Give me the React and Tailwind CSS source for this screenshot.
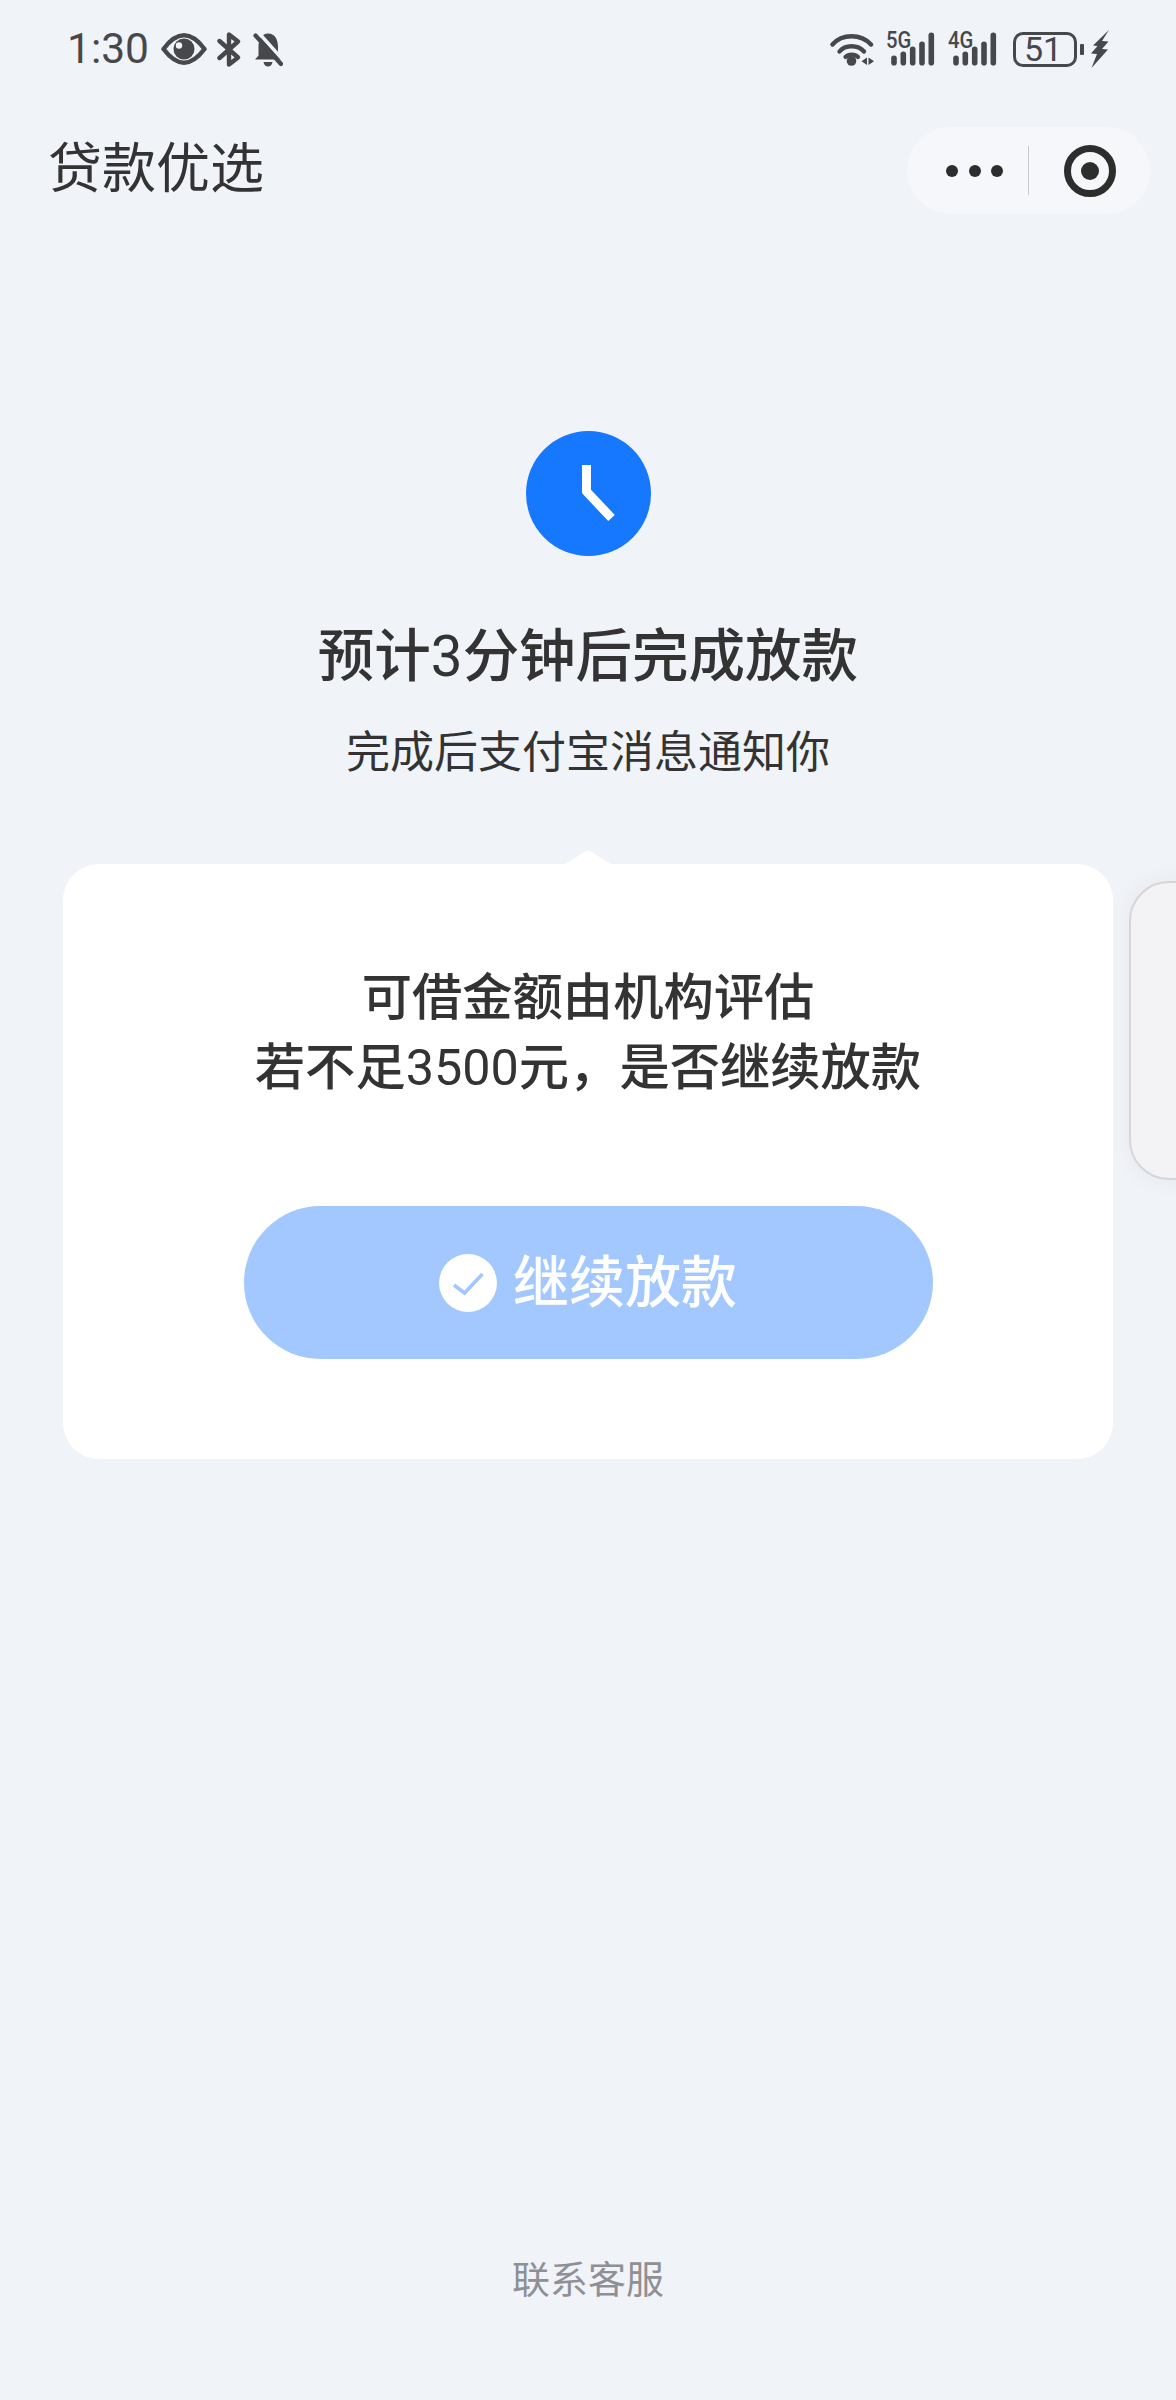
import React from "react";

function Eye() {
  return (
    <svg viewBox="0 0 46 32" className="w-[46px] h-[32px] text-[#46484c]" fill="none">
      <path d="M2.5 16C10 6 17 2.3 23 2.3S36 6 43.5 16C36 26 29 29.7 23 29.7S10 26 2.5 16Z" stroke="currentColor" strokeWidth="4.5" strokeLinejoin="round" />
      <circle cx="23" cy="16" r="10.5" fill="currentColor" />
      <circle cx="18" cy="12.5" r="3.2" fill="#f0f3f8" />
    </svg>
  );
}

function Bluetooth() {
  return (
    <svg viewBox="0 0 24 35" className="w-[24px] h-[35px] text-[#46484c]" fill="none">
      <path d="M2.5 26L21 9.5L12 2.5V32.5L21 25.5L2.5 9" stroke="currentColor" strokeWidth="4.4" strokeLinejoin="round" strokeLinecap="round" />
    </svg>
  );
}

function BellOff() {
  return (
    <svg viewBox="0 0 30 35" className="w-[30px] h-[35px] text-[#46484c]" fill="none">
      <path d="M15 1.5C22.5 1.5 25 8.5 25 15V23.5L28.5 27.5H2L5.5 23.5V15C5.5 8.5 8 1.5 15 1.5Z" fill="currentColor" />
      <path d="M10.5 30H19.5C19 33 17 34.5 15 34.5S11 33 10.5 30Z" fill="currentColor" />
      <path d="M5 0L32 30" stroke="#f0f3f8" strokeWidth="3.5" />
      <path d="M2.5 3.5L28 32" stroke="currentColor" strokeWidth="4.2" strokeLinecap="round" />
    </svg>
  );
}

function Wifi() {
  return (
    <svg viewBox="0 0 44 34" className="w-[44px] h-[34px] text-[#46484c]" fill="none">
      <path d="M2.5 12.5C12 1.5 31 1.5 41 12.5" stroke="currentColor" strokeWidth="4.4" strokeLinecap="round" />
      <path d="M9.5 19.5C15 12.5 28 12.5 34 19.5" stroke="currentColor" strokeWidth="4.4" strokeLinecap="round" />
      <path d="M15.5 25C18.5 21.8 25 21.8 28 25" stroke="currentColor" strokeWidth="4.2" strokeLinecap="round" />
      <circle cx="21.5" cy="29" r="4.8" fill="currentColor" />
      <path d="M37 25.5V33L31.5 29.2Z M38.5 25.5V33L44 29.2Z" fill="currentColor" />
    </svg>
  );
}

function Signal({ label }) {
  const bars = [
    [9, 10],
    [18.3, 14],
    [27.7, 19],
    [37, 24],
    [46.3, 33],
  ];
  return (
    <div className="relative w-[50px] h-[34px] text-[#46484c]">
      <svg viewBox="0 0 50 34" className="w-[50px] h-[34px]" fill="currentColor">
        {bars.map(([x, h]) => (
          <rect key={x} x={x - 2.8} y={33.5 - h} width="5.6" height={h} rx="2.8" />
        ))}
      </svg>
      <span className="absolute left-[1px] top-0 text-[23px] leading-[18px] font-medium origin-left scale-x-[0.88]">{label}</span>
    </div>
  );
}

function Battery() {
  return (
    <div className="flex items-center">
      <div className="w-[64px] h-[35px] rounded-[10px] border-[3px] border-[#46484c] flex items-center justify-center text-[34px] leading-none text-[#46484c] pr-[4px]">
        51
      </div>
      <div className="w-[4px] h-[11px] ml-[3px] rounded-[1px] bg-[#46484c]" />
    </div>
  );
}

function Bolt() {
  return (
    <svg viewBox="0 0 18 38" className="w-[18px] h-[38px] text-[#46484c]" fill="currentColor">
      <path d="M18 0L2 15.5L6.5 16L0 23.5L6 24L0.5 38L17 19.5L11 19L17.5 11.5L11 11Z" />
    </svg>
  );
}

function Clock() {
  return (
    <svg viewBox="0 0 125 125" className="w-[125px] h-[125px]">
      <circle cx="62.5" cy="62.5" r="62.5" fill="#1677ff" />
      <path d="M60.5 34V60.5L85.5 87" fill="none" stroke="#ffffff" strokeWidth="9" strokeLinejoin="round" />
    </svg>
  );
}

function Check() {
  return (
    <svg viewBox="0 0 58 58" className="w-[58px] h-[58px]">
      <circle cx="29" cy="29" r="29" fill="#ffffff" />
      <path d="M15 31L25.5 39L43.5 20" fill="none" stroke="#a2c8ff" strokeWidth="3.6" />
    </svg>
  );
}

export default function App() {
  return (
    <div className="w-[1176px] h-[2400px] bg-[#f0f3f8] flex flex-col overflow-hidden font-['Roboto','Noto_Sans_CJK_SC',sans-serif] text-[#333333]">
      <div className="flex justify-between items-center h-[38px] mt-[30px] pl-[67px] pr-[67px] text-[#46484c]">
        <div className="flex items-center">
          <span className="text-[42.5px] leading-none w-[94px]">1:30</span>
          <Eye />
          <span className="w-[10px]" />
          <Bluetooth />
          <span className="w-[12px]" />
          <BellOff />
        </div>
        <div className="flex items-center">
          <Wifi />
          <span className="w-[11px]" />
          <Signal label="5G" />
          <span className="w-[12px]" />
          <Signal label="4G" />
          <span className="w-[16px]" />
          <Battery />
          <span className="w-[7px]" />
          <Bolt />
        </div>
      </div>

      <div className="flex justify-between items-center mt-[59px] pl-[48px] pr-[26px]">
        <div className="text-[54px] leading-[70px] -mt-[2px]">贷款优选</div>
        <div className="w-[243px] h-[87px] rounded-full bg-[#f6f7fa] flex items-center pl-[39px]">
          <div className="flex gap-[10.5px]">
            <span className="w-[12px] h-[12px] rounded-full bg-[#2d2d2d]" />
            <span className="w-[12px] h-[12px] rounded-full bg-[#2d2d2d]" />
            <span className="w-[12px] h-[12px] rounded-full bg-[#2d2d2d]" />
          </div>
          <span className="w-px h-[49px] bg-[#c9cacd] ml-[25px]" />
          <span className="w-[52px] h-[52px] rounded-full border-[7px] border-[#2d2d2d] ml-[35px] flex items-center justify-center">
            <span className="w-[18px] h-[18px] rounded-full bg-[#2d2d2d]" />
          </span>
        </div>
      </div>

      <div className="flex flex-col items-center mt-[217px]">
        <Clock />
        <h1 className="text-[56.5px] leading-[70px] font-medium mt-[66px]">
          预计<span className="font-[450]">3</span>分钟后完成放款
        </h1>
        <p className="text-[44px] leading-[60px] mt-[31px]">完成后支付宝消息通知你</p>
      </div>

      <div className="flex items-start gap-[16px] pl-[63px] mt-[81px]">
        <div className="relative w-[1050px] shrink-0 rounded-[36px] bg-white pt-[99px] pb-[100px] flex flex-col items-center">
          <svg viewBox="0 0 56 15" className="absolute -top-[14px] left-[497px] w-[56px] h-[15px]">
            <path d="M0 15C8 13 12 10 24 2C27 0 29 0 32 2C44 10 48 13 56 15Z" fill="#ffffff" />
          </svg>
          <div className="text-[50.3px] leading-[70px] font-medium text-center">
            <div>可借金额由机构评估</div>
            <div>
              若不足<span className="font-[450]">3500</span>元，是否继续放款
            </div>
          </div>
          <div className="w-[689px] h-[153px] rounded-full bg-[#a2c8ff] mt-[103px] flex items-center justify-center gap-[16px] text-white text-[56px] font-medium">
            <Check />
            <span>继续放款</span>
          </div>
        </div>
        <div className="w-[200px] h-[299px] mt-[17px] shrink-0 rounded-[40px] bg-[#f3f3f5] border-2 border-[#d6d6d9] shadow-[0_0_24px_rgba(0,0,0,0.05)]" />
      </div>

      <div className="mt-auto pb-[95px] text-center text-[38px] leading-[50px] text-[#8f9095]">联系客服</div>
    </div>
  );
}
